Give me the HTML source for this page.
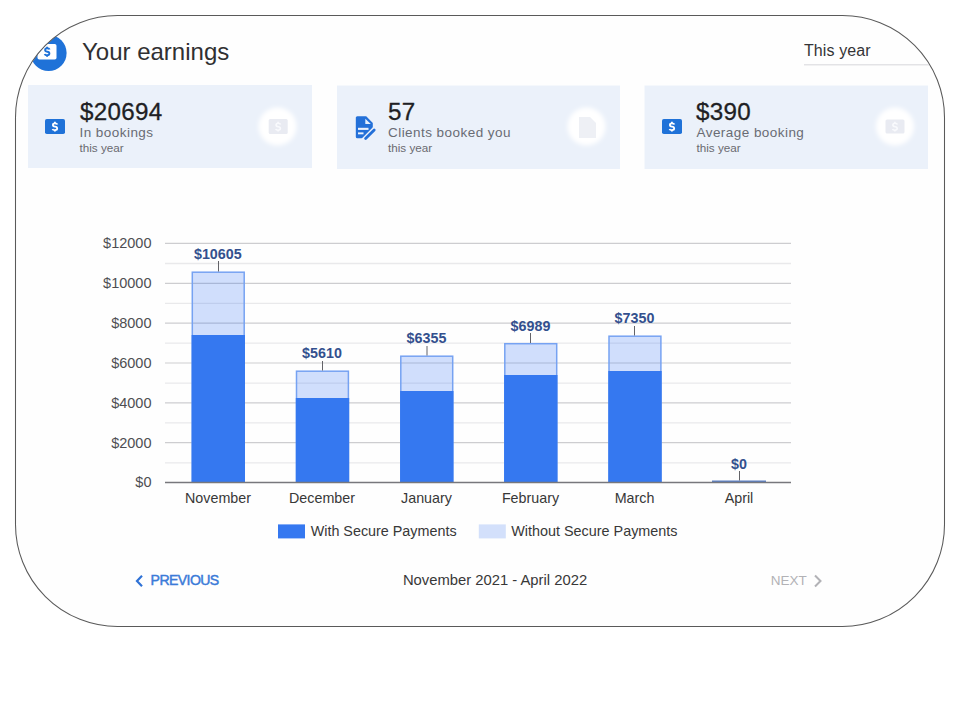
<!DOCTYPE html>
<html><head><meta charset="utf-8">
<style>
html,body{margin:0;padding:0;width:960px;height:720px;background:#fff;overflow:hidden;}
svg{position:absolute;left:0;top:0;display:block;font-family:"Liberation Sans",sans-serif;}
</style></head>
<body>
<svg width="960" height="720" viewBox="0 0 960 720">
  <defs>
    <clipPath id="fc"><rect x="16" y="16" width="928" height="610" rx="101" ry="101"/></clipPath>
    <filter id="blur1" x="-50%" y="-50%" width="200%" height="200%"><feGaussianBlur stdDeviation="1.6"/></filter>
    <filter id="blur2" x="-50%" y="-50%" width="200%" height="200%"><feGaussianBlur stdDeviation="2.2"/></filter>
    <filter id="blur05" x="-50%" y="-50%" width="200%" height="200%"><feGaussianBlur stdDeviation="0.6"/></filter>
  </defs>
  <rect x="15.5" y="15.5" width="929" height="611" rx="102" ry="102" fill="#fefefe" stroke="none"/>

  <g clip-path="url(#fc)">
    <!-- header icon -->
    <circle cx="48.6" cy="53" r="18" fill="#1f72d8"/>
    <rect x="37.5" y="44" width="19" height="15.5" rx="1.8" fill="#fff"/>
    <g transform="translate(44.2,46.8)" fill="none" stroke="#1f72d8" stroke-width="1.9">
      <path d="M5.4 2.7 Q5 1.5 2.9 1.5 Q0.9 1.5 0.9 3.2 Q0.9 4.7 3 4.9 Q5.2 5.1 5.2 6.8 Q5.2 8.4 2.9 8.4 Q0.9 8.4 0.5 7.2"/>
      <path d="M2.9 0 V1.6 M2.9 8.3 V10"/>
    </g>
  </g>

  <!-- frame border -->
  <rect x="15.5" y="15.5" width="929" height="611" rx="102" ry="102" fill="none" stroke="#5a5a5a" stroke-width="1.05"/>

  <!-- title -->
  <text x="82" y="60.3" font-size="24" fill="#303032">Your earnings</text>
  <text x="804" y="56" font-size="16" letter-spacing="0.1" fill="#343436">This year</text>
  <rect x="804" y="64" width="125" height="1.5" fill="#e3e3e6"/>

  <!-- cards -->
  <rect x="28" y="85" width="284" height="83" fill="#ebf1fa"/>
  <rect x="337" y="85.5" width="283" height="83.5" fill="#ebf1fa"/>
  <rect x="644.5" y="85.5" width="283.5" height="83.5" fill="#ebf1fa"/>

  <!-- card1 icon -->
  <rect x="45" y="119" width="20" height="15" rx="1.8" fill="#1f72d8"/>
  <g transform="translate(52,121.8)" fill="none" stroke="#fff" stroke-width="1.8">
    <path d="M5.4 2.7 Q5 1.5 2.9 1.5 Q0.9 1.5 0.9 3.2 Q0.9 4.7 3 4.9 Q5.2 5.1 5.2 6.8 Q5.2 8.4 2.9 8.4 Q0.9 8.4 0.5 7.2"/>
    <path d="M2.9 0 V1.6 M2.9 8.3 V9.8"/>
  </g>
  <!-- card3 icon -->
  <rect x="662" y="119" width="20" height="15" rx="1.8" fill="#1f72d8"/>
  <g transform="translate(669,121.8)" fill="none" stroke="#fff" stroke-width="1.8">
    <path d="M5.4 2.7 Q5 1.5 2.9 1.5 Q0.9 1.5 0.9 3.2 Q0.9 4.7 3 4.9 Q5.2 5.1 5.2 6.8 Q5.2 8.4 2.9 8.4 Q0.9 8.4 0.5 7.2"/>
    <path d="M2.9 0 V1.6 M2.9 8.3 V9.8"/>
  </g>
  <!-- card2 doc icon -->
  <g transform="translate(345,108)">
    <path d="M12.3 8.3 H21.2 L27.8 14.9 V20 L18.5 30.3 H12.3 Q10.8 30.3 10.8 28.8 V9.8 Q10.8 8.3 12.3 8.3Z" fill="#2370d8"/>
    <path d="M20.3 10.8 V16.1 H25.8 Z" fill="#e6f0fc"/>
    <rect x="13" y="19.8" width="10.5" height="2.1" fill="#ebf1fb"/>
    <rect x="13" y="24.4" width="5.5" height="1.9" fill="#ebf1fb"/>
    <path d="M19.2 32 L30.6 20.6" stroke="#ebf1fb" stroke-width="5.6" stroke-linecap="round"/>
    <path d="M20.6 30.6 L29.2 22" stroke="#2370d8" stroke-width="2.8" stroke-linecap="round"/>
  </g>

  <!-- card texts -->
  <g fill="#1f1f24" font-size="24.2" letter-spacing="0.3" stroke="#1f1f24" stroke-width="0.3">
    <text x="80" y="120">$20694</text>
    <text x="388" y="120">57</text>
    <text x="696" y="120">$390</text>
  </g>
  <g fill="#696c74" font-size="13.5" letter-spacing="0.45">
    <text x="79.5" y="137.3">In bookings</text>
    <text x="388" y="137.3">Clients booked you</text>
    <text x="696.5" y="137.3">Average booking</text>
  </g>
  <g fill="#6a6a70" font-size="11.7">
    <text x="79.5" y="151.7">this year</text>
    <text x="388" y="151.7">this year</text>
    <text x="696.5" y="151.7">this year</text>
  </g>

  <!-- ghost icons -->
  <g filter="url(#blur2)">
    <circle cx="277.5" cy="126.5" r="19" fill="#ffffff"/>
    <circle cx="586.5" cy="126.5" r="19" fill="#ffffff"/>
    <circle cx="895" cy="126.5" r="19" fill="#ffffff"/>
  </g>
  <g filter="url(#blur05)">
    <rect x="268.7" y="119" width="19" height="15" rx="1.5" fill="#e9ebf2"/>
    <rect x="885.5" y="119.5" width="19" height="14" rx="1.5" fill="#e9ebf2"/>
    <path d="M579 117 H590 L596 123 V138 H579 Z" fill="#eef0f5"/>
    <g transform="translate(275.2,121.8)" fill="none" stroke="#f9fafd" stroke-width="1.6"><path d="M5.4 2.7 Q5 1.5 2.9 1.5 Q0.9 1.5 0.9 3.2 Q0.9 4.7 3 4.9 Q5.2 5.1 5.2 6.8 Q5.2 8.4 2.9 8.4 Q0.9 8.4 0.5 7.2"/><path d="M2.9 0 V1.6 M2.9 8.3 V9.8"/></g>
    <g transform="translate(892,121.8)" fill="none" stroke="#f9fafd" stroke-width="1.6"><path d="M5.4 2.7 Q5 1.5 2.9 1.5 Q0.9 1.5 0.9 3.2 Q0.9 4.7 3 4.9 Q5.2 5.1 5.2 6.8 Q5.2 8.4 2.9 8.4 Q0.9 8.4 0.5 7.2"/><path d="M2.9 0 V1.6 M2.9 8.3 V9.8"/></g>
  </g>

  <!-- grid minor -->
  <g stroke="#e9e9eb" stroke-width="1.3">
    <line x1="165" y1="263.5" x2="791" y2="263.5"/>
    <line x1="165" y1="303.4" x2="791" y2="303.4"/>
    <line x1="165" y1="343.2" x2="791" y2="343.2"/>
    <line x1="165" y1="383.1" x2="791" y2="383.1"/>
    <line x1="165" y1="422.9" x2="791" y2="422.9"/>
    <line x1="165" y1="462.8" x2="791" y2="462.8"/>
  </g>
  <g stroke="#cdcdd0" stroke-width="1.2">
    <line x1="165" y1="243.4" x2="791" y2="243.4"/>
    <line x1="165" y1="283.3" x2="791" y2="283.3"/>
    <line x1="165" y1="323.1" x2="791" y2="323.1"/>
    <line x1="165" y1="363.0" x2="791" y2="363.0"/>
    <line x1="165" y1="402.8" x2="791" y2="402.8"/>
    <line x1="165" y1="442.6" x2="791" y2="442.6"/>
  </g>
  <g font-size="14.5" fill="#4e4e52" text-anchor="end">
    <text x="151.5" y="248.3">$12000</text>
    <text x="151.5" y="288.3">$10000</text>
    <text x="151.5" y="328">$8000</text>
    <text x="151.5" y="367.5">$6000</text>
    <text x="151.5" y="407.5">$4000</text>
    <text x="151.5" y="447.5">$2000</text>
    <text x="151.5" y="487.3">$0</text>
  </g>

  <!-- bars -->
  <g fill="rgba(25,95,245,0.2)" stroke="#76a2f2" stroke-width="1.5">
    <rect x="192.3" y="272.2" width="51.9" height="210"/>
    <rect x="296.5" y="371.2" width="51.9" height="111"/>
    <rect x="400.8" y="356.2" width="51.9" height="126"/>
    <rect x="504.8" y="343.7" width="51.9" height="138.5"/>
    <rect x="609.0" y="336.2" width="51.9" height="146"/>
  </g>
  <g fill="#3578f0">
    <rect x="191.6" y="335" width="53.4" height="147"/>
    <rect x="295.8" y="398" width="53.4" height="84"/>
    <rect x="400.1" y="391" width="53.4" height="91"/>
    <rect x="504.1" y="375" width="53.4" height="107"/>
    <rect x="608.3" y="371" width="53.4" height="111"/>
  </g>
  <rect x="712" y="480.5" width="54" height="1.5" fill="#5a7fc4"/>
  <line x1="165" y1="482.5" x2="791" y2="482.5" stroke="#77777c" stroke-width="1.6"/>

  <!-- value labels -->
  <g font-size="14.3" font-weight="bold" fill="#33508e" text-anchor="middle">
    <text x="217.8" y="258.7">$10605</text>
    <text x="322" y="358">$5610</text>
    <text x="426.5" y="343">$6355</text>
    <text x="530.5" y="330.5">$6989</text>
    <text x="634.5" y="323">$7350</text>
    <text x="739" y="468.7">$0</text>
  </g>
  <g stroke="#636368" stroke-width="1">
    <line x1="218.5" y1="261" x2="218.5" y2="271.5"/>
    <line x1="322.5" y1="361" x2="322.5" y2="370.5"/>
    <line x1="427" y1="346" x2="427" y2="355.5"/>
    <line x1="530.5" y1="333" x2="530.5" y2="343"/>
    <line x1="634.5" y1="326" x2="634.5" y2="335.5"/>
    <line x1="739.5" y1="471" x2="739.5" y2="480.5"/>
  </g>
  <g font-size="14.3" fill="#383838" text-anchor="middle">
    <text x="218" y="503.3">November</text>
    <text x="322" y="503.3">December</text>
    <text x="426.5" y="503.3">January</text>
    <text x="530.5" y="503.3">February</text>
    <text x="634.5" y="503.3">March</text>
    <text x="739" y="503.3">April</text>
  </g>

  <!-- legend -->
  <rect x="278" y="524.4" width="27" height="14" fill="#3578f0"/>
  <text x="310.7" y="536.1" font-size="14.35" fill="#383838">With Secure Payments</text>
  <rect x="478.8" y="524.4" width="27" height="14" fill="#d3e0fb"/>
  <text x="511.2" y="536.1" font-size="14.4" fill="#383838">Without Secure Payments</text>

  <!-- nav -->
  <path d="M142 575.8 L137 581 L142 586.2" fill="none" stroke="#2f72d6" stroke-width="2.2"/>
  <text x="150.6" y="584.8" font-size="14.1" letter-spacing="-0.6" fill="#3a7ad8" stroke="#3a7ad8" stroke-width="0.45">PREVIOUS</text>
  <text x="495" y="585" font-size="14.8" fill="#383838" text-anchor="middle">November 2021 - April 2022</text>
  <text x="770.8" y="585" font-size="13.5" fill="#b2b2b6">NEXT</text>
  <path d="M815 575.5 L820.5 581 L815 586.5" fill="none" stroke="#b2b2b6" stroke-width="2"/>
</svg>
</body></html>
